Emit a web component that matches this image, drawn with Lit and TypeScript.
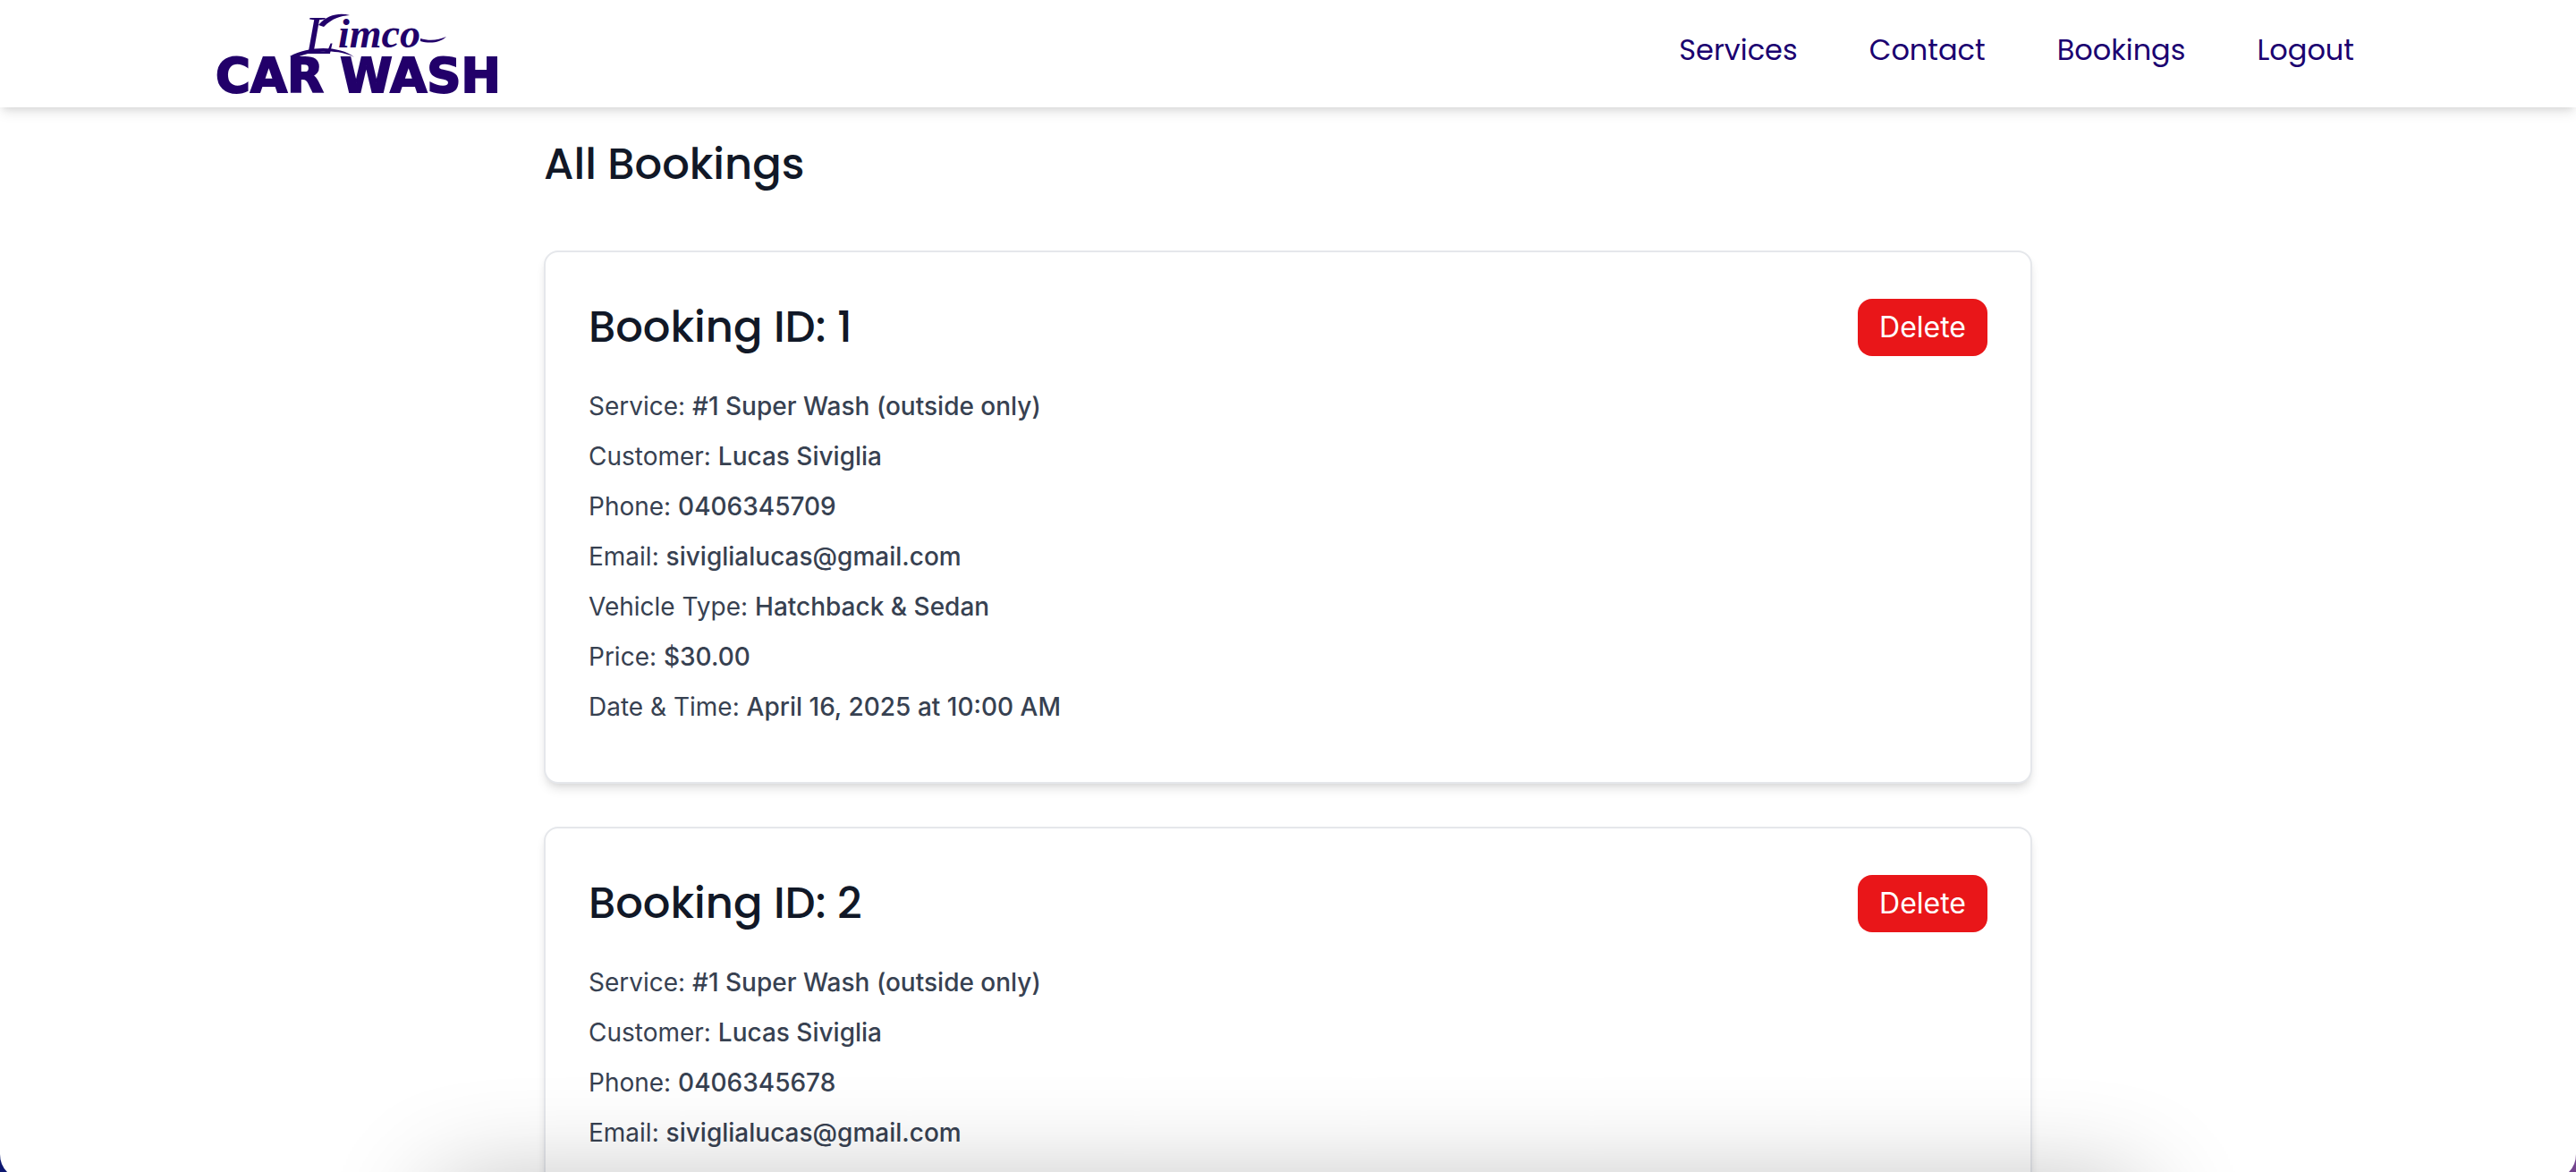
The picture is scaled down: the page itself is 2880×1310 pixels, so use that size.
import { LitElement, html, css } from "lit";
import { customElement, property } from "lit/decorators.js";

interface Booking {
  id: number;
  service: string;
  customer: string;
  phone: string;
  email: string;
  vehicle: string;
  price: string;
  when: string;
}

const bookings: Booking[] = [
  {
    id: 1,
    service: "#1 Super Wash (outside only)",
    customer: "Lucas Siviglia",
    phone: "0406345709",
    email: "siviglialucas@gmail.com",
    vehicle: "Hatchback & Sedan",
    price: "$30.00",
    when: "April 16, 2025 at 10:00 AM",
  },
  {
    id: 2,
    service: "#1 Super Wash (outside only)",
    customer: "Lucas Siviglia",
    phone: "0406345678",
    email: "siviglialucas@gmail.com",
    vehicle: "Hatchback & Sedan",
    price: "$30.00",
    when: "April 16, 2025 at 10:00 AM",
  },
];

@customElement("site-header")
export class SiteHeader extends LitElement {
  static styles = css`
    :host {
      display: block;
      position: relative;
      background: #ffffff;
      box-shadow: 0 8px 12px -2px rgba(0, 0, 0, 0.1), 0 4px 8px -4px rgba(0, 0, 0, 0.1);
    }
    .bar {
      display: flex;
      align-items: center;
      justify-content: space-between;
      box-sizing: border-box;
      max-width: 2400px;
      height: 120px;
      margin: 0 auto;
      padding-right: 8px;
    }
    .brand {
      display: block;
    }
    .logo {
      display: block;
      width: 324px;
      height: 120px;
      fill: #22006a;
    }
    .wash {
      font: 700 53px "DejaVu Sans", sans-serif;
      stroke: #22006a;
      stroke-width: 2px;
    }
    .script {
      font: italic 700 46px "Liberation Serif", serif;
    }
    .initial {
      font-size: 62px;
      font-weight: 400;
    }
    .nav {
      display: flex;
      gap: 80px;
      padding-bottom: 8px;
    }
    .link {
      color: #1a0070;
      font: 400 32px/48px "Poppins", "Inter", sans-serif;
      text-decoration: none;
    }
  `;

  render() {
    return html`
      <div class="bar">
        <a class="brand" href="#">
          <svg class="logo" viewBox="0 0 324 120" role="img" aria-label="Limco Car Wash">
            <text class="script" x="100" y="60"><tspan class="initial">L</tspan><tspan x="138" y="53">imco</tspan></text>
            <path d="M84 63 C106 51 140 51 156 64 C139 55 112 56 92 64 Z" />
            <path d="M116 28 C126 16 140 14 151 17 C140 18 132 20 122 30 Z" />
            <path d="M230 43 C240 46 250 45 259 41 C252 48 240 49 230 46 Z" />
            <text class="wash" x="1" y="103">CAR WASH</text>
          </svg>
        </a>
        <nav class="nav">
          <a class="link" href="#services">Services</a>
          <a class="link" href="#contact">Contact</a>
          <a class="link" href="#bookings">Bookings</a>
          <a class="link" href="#logout">Logout</a>
        </nav>
      </div>
    `;
  }
}

@customElement("booking-card")
export class BookingCard extends LitElement {
  @property({ attribute: false }) booking!: Booking;

  static styles = css`
    :host {
      display: block;
      padding: 48px;
      border: 2px solid #e5e7eb;
      border-radius: 16px;
      background: #ffffff;
      box-shadow: 0 8px 12px -2px rgba(0, 0, 0, 0.1), 0 4px 8px -4px rgba(0, 0, 0, 0.1);
    }
    .head {
      display: flex;
      align-items: center;
      justify-content: space-between;
      margin-bottom: 32px;
    }
    .title {
      margin: 0;
      color: #111827;
      font: 500 48px/72px "Poppins", "Inter", sans-serif;
    }
    .delete {
      height: 64px;
      padding: 0 24px;
      border: 0;
      border-radius: 16px;
      background: #e91619;
      color: #ffffff;
      font: 400 32px/48px "Inter", sans-serif;
      cursor: pointer;
    }
    .row {
      margin: 0 0 16px;
      color: #374151;
      font: 400 28px/40px "Inter", sans-serif;
    }
    .value {
      font-weight: 500;
    }
  `;

  render() {
    const b = this.booking;
    const rows: [string, string][] = [
      ["Service", b.service],
      ["Customer", b.customer],
      ["Phone", b.phone],
      ["Email", b.email],
      ["Vehicle Type", b.vehicle],
      ["Price", b.price],
      ["Date & Time", b.when],
    ];
    return html`
      <div class="head">
        <h2 class="title">Booking ID: ${b.id}</h2>
        <button class="delete" type="button">Delete</button>
      </div>
      ${rows.map(([label, value]) => html`<p class="row">${label}: <span class="value">${value}</span></p>`)}
    `;
  }
}

@customElement("app-root")
export class AppRoot extends LitElement {
  static styles = css`
    :host {
      display: block;
      position: relative;
      height: 100vh;
      overflow: hidden;
      background: #ffffff;
    }
    .page {
      max-width: 1664px;
      margin: 0 auto;
      padding: 28px 64px 48px;
    }
    .heading {
      margin: 0 0 60px;
      color: #111827;
      font: 500 48px/72px "Poppins", "Inter", sans-serif;
    }
    .list {
      display: flex;
      flex-direction: column;
      gap: 48px;
    }
    .shade {
      position: absolute;
      top: 100%;
      left: 17%;
      right: 17%;
      height: 200px;
      box-shadow: 0 20px 120px rgba(0, 0, 0, 0.3);
      pointer-events: none;
    }
    .corner {
      position: absolute;
      bottom: 0;
      width: 8px;
      height: 20px;
    }
    .left {
      left: 0;
      fill: #0d1770;
    }
    .right {
      right: 0;
      fill: #74458f;
    }
  `;

  render() {
    return html`
      <site-header></site-header>
      <main class="page">
        <h1 class="heading">All Bookings</h1>
        <div class="list">
          ${bookings.map((b) => html`<booking-card .booking=${b}></booking-card>`)}
        </div>
      </main>
      <div class="shade"></div>
      <svg class="corner left" viewBox="0 0 8 20" aria-hidden="true"><path d="M0 0 Q0 12 8 20 H0 Z" /></svg>
      <svg class="corner right" viewBox="0 0 8 20" aria-hidden="true"><path d="M8 0 Q8 12 0 20 H8 Z" /></svg>
    `;
  }
}
